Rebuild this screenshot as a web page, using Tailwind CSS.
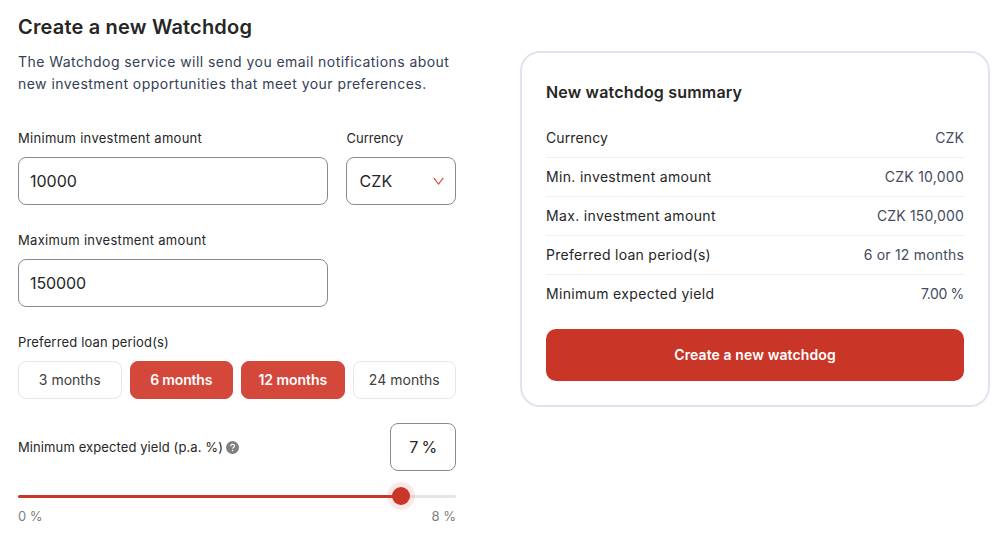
<!DOCTYPE html>
<html lang="en">
<head>
<meta charset="utf-8">
<title>Create a new Watchdog</title>
<script src="https://cdn.jsdelivr.net/npm/@tailwindcss/browser@4"></script>
</head>
<body class="h-[542px] w-[1006px] overflow-hidden bg-white font-['Inter',sans-serif] text-[#262626] antialiased">
<main class="flex items-start gap-16 pl-[18px]">
  <form class="w-[438px] shrink-0 pt-3">
    <h1 class="text-[20px] leading-[30px] font-semibold tracking-[0.18px] whitespace-nowrap">Create a new Watchdog</h1>
    <p class="mt-[9px] text-[14px] leading-[22px] whitespace-nowrap text-[#344056]"><span class="tracking-[0.44px]">The Watchdog service will send you email notifications about</span><br><span class="tracking-[0.46px]">new investment opportunities that meet your preferences.</span></p>

    <div class="mt-[33px] flex gap-[18px]">
      <div class="w-[310px]">
        <label class="block text-[13px] leading-5 tracking-[0.29px]">Minimum investment amount</label>
        <div class="mt-[9px] flex h-12 items-center rounded-lg border border-[#858c94] px-[11px] text-[16px]">10000</div>
      </div>
      <div class="w-[110px]">
        <label class="block pl-[0.5px] text-[13px] leading-5">Currency</label>
        <div class="mt-[9px] flex h-12 items-center justify-between rounded-lg border border-[#858c94] pr-[11px] pl-[12.5px] text-[16px] tracking-[0.13px]">CZK
          <svg class="h-2 w-3" viewBox="0 0 12 8" fill="none" stroke="#d4483b" stroke-width="1.1"><path d="M1.7 .8 6.5 7 11.3.8"/></svg>
        </div>
      </div>
    </div>

    <div class="mt-[25px] w-[310px]">
      <label class="block text-[13px] leading-5 tracking-[0.31px]">Maximum investment amount</label>
      <div class="mt-[9px] flex h-12 items-center rounded-lg border border-[#858c94] px-[11px] text-[16px] tracking-[-0.1px]">150000</div>
    </div>

    <div class="mt-[25px]">
      <span class="block text-[13px] leading-5 tracking-[0.16px]">Preferred loan period(s)</span>
      <div class="mt-[9px] grid grid-cols-4 gap-2 text-center text-[14px] leading-9">
        <div class="rounded-lg border border-[#e5e5e5] text-[#404040]">3 months</div>
        <div class="rounded-lg border border-[#d4483b] bg-[#d4483b] font-semibold tracking-[-0.17px] text-white">6 months</div>
        <div class="rounded-lg border border-[#d4483b] bg-[#d4483b] font-semibold tracking-[-0.05px] text-white">12 months</div>
        <div class="rounded-lg border border-[#e5e5e5] tracking-[0.05px] text-[#404040]">24 months</div>
      </div>
    </div>

    <div class="mt-6 flex items-center">
      <span class="pt-0.5 text-[13px] tracking-[0.1px]">Minimum expected yield (p.a. %)</span>
      <svg class="ml-[3px] h-[13px] w-[13px]" viewBox="0 0 13 13"><circle cx="6.5" cy="6.5" r="6.5" fill="#808080"/><path d="M4.6 5.2C4.6 2.7 8.5 2.8 8.5 5 8.5 6.3 6.6 6.3 6.6 7.8" fill="none" stroke="#fff" stroke-width="1.1"/><circle cx="6.6" cy="9.6" r=".75" fill="#fff"/></svg>
      <div class="ml-auto flex h-12 w-[66px] items-center justify-center rounded-lg border border-[#858c94] text-[16px] tracking-[-0.6px]">7 %</div>
    </div>

    <div class="relative mt-6 h-[3px] rounded-full bg-[#e5e5e5]">
      <div class="h-full rounded-full bg-[#c93628]" style="width:87.5%"></div>
      <div class="absolute top-px h-[18px] w-[18px] -translate-x-1/2 -translate-y-1/2 rounded-full bg-[#c93628] ring-[5px] ring-[#e8432f]/12" style="left:87.5%"></div>
    </div>
    <div class="mt-2 flex justify-between text-[13px] leading-5 text-[#808080]"><span>0 %</span><span>8 %</span></div>
  </form>

  <section class="mt-[51px] h-[356px] w-[470px] shrink-0 rounded-[20px] border-2 border-[#e0e4ef] px-6 pt-[27px]">
    <h2 class="text-[16px] leading-6 font-semibold tracking-[0.19px]">New watchdog summary</h2>
    <dl class="mt-[15px] divide-y divide-[#eef0f4] text-[14px] leading-[22px]">
      <div class="flex h-[39px] items-center justify-between"><dt class="tracking-[0.12px]">Currency</dt><dd class="tracking-[0.1px] text-[#434c61]">CZK</dd></div>
      <div class="flex h-[39px] items-center justify-between"><dt class="tracking-[0.32px]">Min. investment amount</dt><dd class="tracking-[0.25px] text-[#434c61]">CZK 10,000</dd></div>
      <div class="flex h-[39px] items-center justify-between"><dt class="tracking-[0.35px]">Max. investment amount</dt><dd class="tracking-[0.17px] text-[#434c61]">CZK 150,000</dd></div>
      <div class="flex h-[39px] items-center justify-between"><dt class="tracking-[0.27px]">Preferred loan period(s)</dt><dd class="tracking-[0.19px] text-[#434c61]">6 or 12 months</dd></div>
      <div class="flex h-[38px] items-center justify-between"><dt class="tracking-[0.33px]">Minimum expected yield</dt><dd class="tracking-[-0.35px] text-[#434c61]">7.00 %</dd></div>
    </dl>
    <button type="button" class="mt-4 block h-[52px] w-full rounded-[10px] bg-[#c93628] pb-0.5 text-[14px] font-semibold tracking-[0.1px] text-white">Create a new watchdog</button>
  </section>
</main>
</body>
</html>
